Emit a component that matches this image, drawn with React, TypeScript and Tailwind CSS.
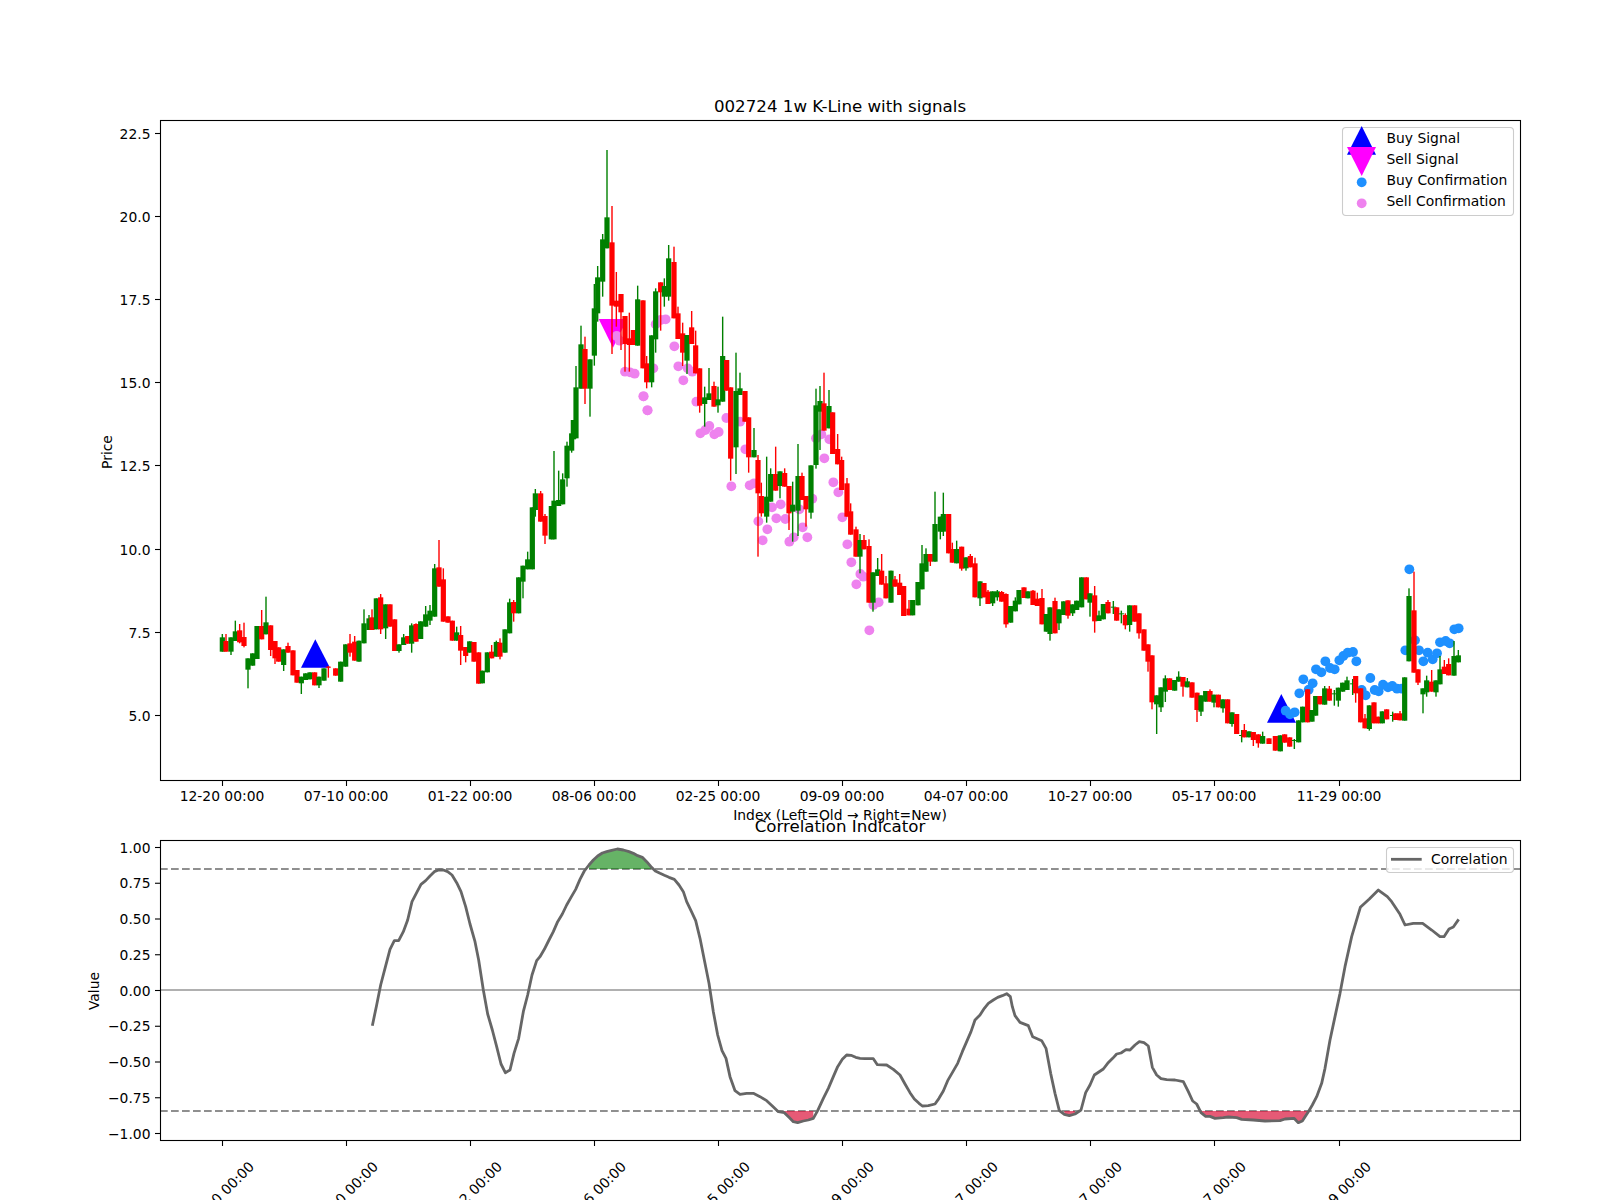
import React from "react";

type Row = number[];
type Seg = { xb: number; yb: number; rows: Row[] };

// rows: green?, x, bodyTop, bodyBottom, wickTop?, wickBottom? (measured on 3x crops)
const segs: Seg[] = [
  { xb: 140, yb: 500, rows: [
    [1,247,412,455,402,455],[0,258,423,455,402,455],[1,273,412,455,412,465],[1,286,394,423,362,423],[0,299,391,427,372,430],[0,312,411,438,368,442],
    [1,324,475,509,475,565],[1,338,460,497],[1,351,378,477],[0,365,378,418,330],[1,378,367,403,290],[0,392,376,450,376,468],[0,405,423,475,423,492],
    [0,416,442,485],[1,431,448,495,448,513],[0,444,438,458,428],[0,459,451,526],[0,471,510,548],[1,484,530,550,530,582],[1,497,520,540],[1,510,517,538],
    [0,524,517,556],[1,537,530,556,530,564],[1,552,505,542],[0,565,500,503,498,533],[0,587,505,527],[1,602,485,545],[1,617,433,500],[0,630,430,458,402,470],
    [0,644,425,482,408],[1,657,422,485],[1,672,370,430,328],[1,687,355,390,345],[0,696,352,390,328],[1,709,295,388],[0,722,292,388,282,402],
    [1,737,313,385,313,417],[0,750,313,380],[0,764,358,453],[1,777,433,453,433,458],[1,791,412,435,402],[0,803,408,431],[1,815,376,431,370,458],
    [0,828,372,425,370],[1,842,364,417],[1,857,343,380,318],[1,870,332,362,315,375],[1,884,205,350,192],[0,897,202,260,120],[0,910,238,365,205],
    [0,924,349,368],[0,937,362,422],[1,950,397,422,380],[0,962,405,452,378,495],[0,977,441,468,441,487],[1,989,424,458],[0,1002,426,485],[0,1016,457,551],
    [1,1027,512,550],[1,1042,457,517],[0,1055,455,475,435],[1,1069,426,470,422],[0,1080,428,470,415,478],[1,1095,388,458],[1,1109,307,400,296],
    [0,1121,306,340,300,365],[1,1136,232,340],[1,1149,197,245,197,295],[1,1163,178,208,155],[1,1177,22,208],
  ]},
  { xb: 490, yb: 330, rows: [
    [1,136,490,540,477,560],[0,152,490,575,483],[0,165,558,617,552,642],[1,184,528,628],[1,192,512,628,363],[1,206,510,528,422],[1,218,448,523,430],
    [1,231,347,445,335,470],[1,245,310,362,310,368],[1,250,270,328],[1,258,172,325,108],
  ]},
  { xb: 500, yb: 130, rows: [
    [1,243,643,776,587],[0,255,657,776,620,822],[1,270,688,776,688,860],[1,283,535,677,462,707],[1,293,442,550,408,575],[1,308,328,455,312,500],[1,321,262,355,60],
    [0,336,337,527,228,672],[0,349,512,530,426,590],[0,363,492,547,492,660],[0,375,558,642,558,725],[0,388,625,645,548,725],[0,400,600,645],[1,413,508,647,467],
    [0,429,511,715],[0,440,700,757,678,775],[1,455,616,757,616,772],[1,467,484,628,475,668],[0,482,457,487,457,602],[1,493,468,500,445,530],[1,506,385,500,345,512],
    [0,522,396,565,350],[0,534,550,627,530],[0,548,610,668,578,708],[1,561,615,692,615,732],[0,575,592,642,543],[0,587,646,730,602],[0,599,715,827,715,848],
    [1,614,802,822,770,890],[1,627,790,810,714],[0,642,768,830,755],[1,654,808,826,770,848],[1,668,678,815,560],[0,680,690,782],
  ]},
  { xb: 640, yb: 300, rows: [
    [0,272,262,476,262,542],[1,288,273,442,158,522],[1,300,265,285,218],[0,315,273,365],[0,326,352,472,352,518],[1,342,450,472,384],[0,354,480,580,465,770],
    [0,364,588,640,548,650],[1,380,590,650,470,668],[1,392,522,605,505],[0,407,522,572,440],[1,420,514,558,514,595],[0,434,519,560,505],[0,447,558,640,558,690],
    [1,458,614,635,545,725],[1,474,528,632,432,708],[0,486,528,600,518],[0,498,588,628,588,680],[1,513,496,638,496,656],[1,528,316,495,266,506],[1,540,303,335,258,450],
    [0,552,310,392,218],[1,567,318,385,270],[0,578,337,462],[0,593,447,493,402],[0,605,480,570,470],[0,621,550,650,534],[0,632,634,704,610],[0,648,688,770,680],
    [1,660,720,770,702,820],[0,672,720,748,705],[0,687,738,908,718],[1,699,817,908,817,935],[1,713,808,828,774],[0,725,812,854,762,854],[0,738,850,895,828],
    [1,753,812,908],[0,765,838,860,828],[0,779,848,885,822],[0,791,858,948],[0,807,926,946,900],[1,818,900,946],[1,834,846,916],[1,846,790,868,735],[1,858,762,815,745],
    [0,871,762,785,762,798],[1,885,672,785,575],
  ]},
  { xb: 920, yb: 480, rows: [
    [1,61,110,155,110,178],[1,70,102,155,38,168],[0,86,102,220],[0,97,207,248,188],[1,110,207,250,182],[0,125,200,266,200,272],[1,138,232,265,232,272],[0,151,228,262,222],
    [0,165,250,352,233],[1,180,304,355,304,378],[0,192,309,352],[0,204,335,372,330],[1,218,334,370,334,378],[1,232,334,352,330,362],[0,245,336,365,333],[0,258,342,433,340,443],
    [1,272,378,428],[1,286,362,394,352],[1,297,330,373],[0,312,322,354],[1,324,334,355],[0,339,332,375,330],[0,352,356,378,338],[0,366,354,433,327],[1,379,402,455],
    [1,390,382,462,382,482],[0,405,363,460,353],[1,417,388,430,388,450],[1,431,364,405],[0,444,361,407,361,416],[1,458,373,400,373,408],[1,470,362,390],[1,485,292,382],
    [0,499,292,358],[1,510,340,368,340,410],[0,524,346,424,318,458],[1,537,406,423,392],[1,550,372,418],[0,564,366,400,360],[1,580,380,383,363,402],[0,590,382,422],
    [1,604,400,403,392,430],[0,616,405,436,400,448],[1,629,376,435,376,455],[0,644,376,425],[0,657,400,460,400,476],[0,672,448,512],[0,684,493,545,493,575],[0,696,526,667,526,688],
    [1,710,646,673,646,762],[1,723,622,682,622,696],[1,736,595,635,586,666],[0,749,595,630],[1,764,600,632],[1,776,590,605,574],[0,789,591,620,591,650],[1,802,604,622,594],
    [0,816,607,653],[0,831,638,690,638,726],[1,843,646,695,646,708],[1,857,633,665],[0,870,633,665,628],[1,882,644,668,644,682],[0,895,644,682],
  ]},
  { xb: 1200, yb: 540, rows: [
    [1,69,478,505,478,518],[0,83,478,550],[1,96,517,552,517,560],[0,110,522,582],[1,125,585,588,570,607],[0,133,570,592,552],[1,147,574,592],[0,160,576,600,576,618],
    [0,175,583,610,583,623],[1,188,588,611,575],[0,207,595,612],[0,226,588,632],[1,241,586,634],[0,254,583,608],[0,269,592,620],[1,283,600,603,597,627],[1,296,541,607],
    [1,308,500,547],[0,323,448,547],[1,336,510,545],[1,347,468,527],[0,360,468,493],[1,374,445,494,438],[0,388,446,482,438],[1,403,460,463,450,497],[1,415,443,482,443,500],
    [1,428,428,455],[1,441,421,450,410],[1,458,430,433,417,465],[0,467,408,460,408,488],[0,482,445,547],[0,495,535,565,522],[1,508,496,567,496,572],[0,522,487,550],
    [0,535,530,550],[1,547,514,550],[0,560,508,538],[1,578,525,528,515,545],[0,587,520,540],[0,600,520,541,513],[1,614,412,542],[1,627,168,364,145],[0,642,211,398,95],
    [0,654,388,428,388,435],[1,669,445,463,445,520],[1,680,421,457,407,470],[0,695,425,455,390],[1,708,421,457,421,470],[1,720,388,433,348],[0,733,380,402,360],
    [0,746,372,406,355],[1,762,348,407,303],[1,775,346,367,330],
  ]},
];

const z = (b: number, v: number) => b + v / 3;

const blueDots = [[257,512],[270,523],[284,517],[298,460],[310,418],[326,449],[338,430],[348,388],[364,397],[376,364],[390,384],[404,388],[418,361],[430,348],[443,338],[459,336],[469,364],[485,450],[497,466],[511,414],[524,450],[536,454],[549,434],[564,442],[577,438],[591,446],[605,446],[616,331],[628,88],[645,301],[657,331],[670,364],[683,338],[698,358],[711,340],[720,307],[737,303],[749,310],[763,268],[776,265]];
const pinkA = [[350,618],[359,632],[375,725],[390,727],[404,731],[430,799],[443,841]];
const pinkB = [[47,73],[62,60],[77,58],[103,139],[40,205],[11,289],[22,331],[115,199],[130,241],[143,205],[157,215],[169,305],[181,400],[196,390],[208,378],[223,403],[236,396],[259,354],[274,559],[300,365],[316,448],[329,556],[342,550],[355,664],[368,721],[382,688],[396,622],[409,655],[422,613],[436,657],[448,725],[461,712],[478,628],[488,682],[502,712],[517,596],[528,415],[544,403],[553,475],[568,418],[580,547],[595,577],[607,652],[622,733],[634,787],[649,853],[661,822],[670,830],[700,915],[716,907],[688,991]];

const corrA = [[937,707],[950,645],[962,585],[975,535],[990,478],[1003,452],[1016,452],[1030,425],[1043,390],[1056,335],[1070,308],[1083,283],[1097,272],[1110,258],[1123,245],[1136,240],[1150,240],[1163,245],[1176,255],[1190,278],[1203,305],[1217,350],[1230,402],[1245,455],[1256,510],[1270,600],[1283,672],[1297,720],[1310,770],[1323,822],[1336,848],[1350,840],[1362,790],[1376,745],[1390,665],[1403,615],[1416,555],[1430,512]];
const corrB = [[0,500],[13,478],[27,450],[40,425],[53,395],[67,372],[80,345],[93,322],[107,298],[120,268],[133,243],[147,225],[160,210],[173,198],[187,189],[200,185],[215,181],[232,177],[250,180],[267,185],[280,190],[293,197],[307,202],[320,215],[333,230],[346,243],[360,250],[373,256],[387,262],[403,268],[417,285],[430,305],[440,335],[453,362],[467,392],[480,445],[493,510],[507,580],[520,665],[533,735],[546,782],[558,805],[570,860],[585,902],[600,913],[620,910],[640,910],[660,920],[680,932],[697,948],[715,965],[733,968],[747,982],[760,995],[773,998],[790,993],[805,990],[820,985],[833,962],[850,925],[865,895],[880,860],[893,830],[907,808],[920,795],[933,796],[947,802],[960,805],[975,806],[1000,806],[1012,824],[1040,825],[1060,838],[1080,855],[1095,882],[1110,908],[1123,927],[1137,940],[1147,948],[1165,947],[1185,942],[1197,925],[1210,903],[1223,872],[1237,848],[1253,820],[1267,785],[1280,755],[1293,725],[1305,690],[1320,675],[1333,655],[1345,640],[1360,630],[1373,622],[1387,617],[1400,611],[1411,620],[1417,650],[1425,677]];
const corrC = [[0,697],[25,707],[38,740],[65,752],[78,775],[92,850],[105,910],[118,962],[133,973],[148,977],[165,972],[183,960],[197,908],[210,885],[223,855],[250,837],[263,820],[278,805],[290,792],[303,789],[318,779],[330,780],[345,765],[358,755],[372,758],[385,768],[397,832],[410,855],[423,866],[440,869],[465,870],[490,875],[505,905],[518,933],[530,942],[543,968],[557,979],[570,979],[585,985],[610,983],[625,981],[650,983],[665,988],[700,990],[735,993],[780,992],[795,987],[822,985],[835,998],[847,993],[865,965],[877,945],[890,920],[905,880],[915,835],[930,750],[945,680],[960,610],[975,530],[995,440],[1021,352],[1048,327],[1075,300],[1102,320],[1115,335],[1140,373],[1155,405],[1180,400],[1208,400],[1235,420],[1260,440],[1272,440],[1287,417],[1300,411],[1316,388]];

const corr: number[][] = [
  ...corrA.map(([x, y]) => [z(60, x), z(790, y)]),
  ...corrB.map(([x, y]) => [z(540, x), z(790, y)]),
  ...corrC.map(([x, y]) => [z(1020, x), z(790, y)]),
];

const UP = 869;
const DOWN = 1111;

function runs(test: (y: number) => boolean, level: number): string[] {
  const out: string[] = [];
  let cur: number[][] = [];
  const flush = () => {
    if (cur.length > 1) {
      const first = cur[0][0];
      const last = cur[cur.length - 1][0];
      out.push([[first, level], ...cur, [last, level]].map((p) => p.join(",")).join(" "));
    }
    cur = [];
  };
  for (const p of corr) {
    if (test(p[1])) cur.push(p);
    else flush();
  }
  flush();
  return out;
}

const dates = ["12-20 00:00","07-10 00:00","01-22 00:00","08-06 00:00","02-25 00:00","09-09 00:00","04-07 00:00","10-27 00:00","05-17 00:00","11-29 00:00"];
const tickX = dates.map((_, i) => (i === 9 ? 1339.5 : 222.5 + 124 * i));
const priceTicks = [["22.5",133.5],["20.0",216.5],["17.5",299.5],["15.0",382.5],["12.5",465.5],["10.0",549.5],["7.5",632.5],["5.0",715.5]] as [string, number][];
const corrTicks = ["1.00","0.75","0.50","0.25","0.00","−0.25","−0.50","−0.75","−1.00"];

const tickCls = "font-['DejaVu_Sans'] text-[13.89px] fill-black";

function Candles() {
  return (
    <g>
      {segs.flatMap((s, si) =>
        s.rows.map((r, i) => {
          const [g, x, t, b, wt, wb] = r;
          const px = z(s.xb, x);
          const top = z(s.yb, t);
          const bot = z(s.yb, b);
          const wTop = wt === undefined ? top : z(s.yb, wt);
          const wBot = wb === undefined ? bot : z(s.yb, wb);
          const c = g ? "#008000" : "#ff0000";
          return (
            <g key={si + "-" + i}>
              <rect x={px - 0.7} y={wTop} width={1.4} height={wBot - wTop} fill={c} />
              <rect x={px - 2.6} y={top} width={5.2} height={bot - top} fill={c} />
            </g>
          );
        })
      )}
    </g>
  );
}

function PriceChart() {
  return (
    <svg width={1600} height={820} viewBox="0 0 1600 820" className="block overflow-visible shrink-0">
      <text x={840} y={112} textAnchor="middle" className="font-['DejaVu_Sans'] text-[16.67px] fill-black">002724 1w K-Line with signals</text>

      <polygon points="315.3,639.3 301,667.7 330,667.7" fill="#0000ff" />
      <polygon points="1281.3,694 1267,722.7 1296,722.7" fill="#0000ff" />
      <polygon points="613,347.7 598.7,319 627.3,319" fill="#ff00ff" />

      {pinkA.map(([x, y], i) => (
        <circle key={"a" + i} cx={z(500, x)} cy={z(130, y)} r={4.9} fill="#ee82ee" />
      ))}
      {pinkB.map(([x, y], i) => (
        <circle key={"b" + i} cx={z(640, x)} cy={z(300, y)} r={4.9} fill="#ee82ee" />
      ))}
      {blueDots.map(([x, y], i) => (
        <circle key={"c" + i} cx={z(1200, x)} cy={z(540, y)} r={4.9} fill="#1e90ff" />
      ))}

      <Candles />

      <rect x={160.5} y={120.5} width={1360} height={660} fill="none" stroke="#000" strokeWidth={1.1} />

      {priceTicks.map(([l, y]) => (
        <g key={l}>
          <line x1={155} x2={160} y1={y} y2={y} stroke="#000" strokeWidth={1.1} />
          <text x={150.5} y={y + 5} textAnchor="end" className={tickCls}>{l}</text>
        </g>
      ))}
      {dates.map((d, i) => (
        <g key={d}>
          <line x1={tickX[i]} x2={tickX[i]} y1={781} y2={786} stroke="#000" strokeWidth={1.1} />
          <text x={tickX[i] - 0.5} y={801} textAnchor="middle" className={tickCls}>{d}</text>
        </g>
      ))}
      <text x={840} y={820} textAnchor="middle" className={tickCls}>Index (Left=Old → Right=New)</text>
      <text transform="rotate(-90 112 452)" x={112} y={452} textAnchor="middle" className={tickCls}>Price</text>

      {/* legend */}
      <rect x={1342.5} y={127.5} width={171} height={88} rx={3.5} fill="#ffffff" fillOpacity={0.8} stroke="#cccccc" strokeWidth={1.1} />
      <polygon points="1361.7,126 1347,154.7 1376,154.7" fill="#0000ff" />
      <polygon points="1361.7,176 1347,147 1376,147" fill="#ff00ff" />
      <circle cx={1361.7} cy={182.3} r={4.9} fill="#1e90ff" />
      <circle cx={1361.7} cy={203.3} r={4.9} fill="#ee82ee" />
      <text x={1386.5} y={143} className={tickCls}>Buy Signal</text>
      <text x={1386.5} y={164} className={tickCls}>Sell Signal</text>
      <text x={1386.5} y={185} className={tickCls}>Buy Confirmation</text>
      <text x={1386.5} y={206} className={tickCls}>Sell Confirmation</text>
    </svg>
  );
}

function CorrelationChart() {
  const line = corr.map((p) => p.join(",")).join(" ");
  return (
    <svg width={1600} height={380} viewBox="0 820 1600 380" className="block overflow-visible shrink-0">
      <text x={840} y={832} textAnchor="middle" className="font-['DejaVu_Sans'] text-[16.67px] fill-black">Correlation Indicator</text>

      <line x1={160} x2={1520} y1={UP} y2={UP} stroke="#8f8f8f" strokeWidth={2} strokeDasharray="7.7 3.3" />
      <line x1={160} x2={1520} y1={DOWN} y2={DOWN} stroke="#8f8f8f" strokeWidth={2} strokeDasharray="7.7 3.3" />
      <line x1={160} x2={1520} y1={990} y2={990} stroke="#b0b0b0" strokeWidth={2} />

      {runs((y) => y < UP, UP).map((p, i) => (
        <polygon key={"g" + i} points={p} fill="#008000" fillOpacity={0.6} />
      ))}
      {runs((y) => y > DOWN, DOWN).map((p, i) => (
        <polygon key={"r" + i} points={p} fill="#dc143c" fillOpacity={0.7} />
      ))}
      <polyline points={line} fill="none" stroke="#666666" strokeWidth={2.8} strokeLinejoin="round" />

      <rect x={160.5} y={840.5} width={1360} height={300} fill="none" stroke="#000" strokeWidth={1.1} />

      {corrTicks.map((l, i) => {
        const y = 847.5 + i * 35.75;
        return (
          <g key={l}>
            <line x1={155} x2={160} y1={y} y2={y} stroke="#000" strokeWidth={1.1} />
            <text x={150.5} y={y + 5} textAnchor="end" className={tickCls}>{l}</text>
          </g>
        );
      })}
      {dates.map((d, i) => (
        <g key={d}>
          <line x1={tickX[i]} x2={tickX[i]} y1={1141} y2={1146} stroke="#000" strokeWidth={1.1} />
          <text
            transform={`rotate(-45 ${tickX[i] - 1} 1194)`}
            x={tickX[i] - 1}
            y={1194}
            textAnchor="middle"
            dominantBaseline="central"
            className={tickCls}
          >
            {d}
          </text>
        </g>
      ))}
      <text transform="rotate(-90 99 991)" x={99} y={991} textAnchor="middle" className={tickCls}>Value</text>

      {/* legend */}
      <rect x={1386.5} y={847.5} width={127} height={25} rx={3.5} fill="#ffffff" fillOpacity={0.8} stroke="#cccccc" strokeWidth={1.1} />
      <line x1={1391} x2={1421.7} y1={859.3} y2={859.3} stroke="#666666" strokeWidth={2.8} />
      <text x={1431} y={864} className={tickCls}>Correlation</text>
    </svg>
  );
}

export default function App() {
  return (
    <div className="w-[1600px] h-[1200px] overflow-hidden bg-white flex flex-col">
      <PriceChart />
      <CorrelationChart />
    </div>
  );
}
